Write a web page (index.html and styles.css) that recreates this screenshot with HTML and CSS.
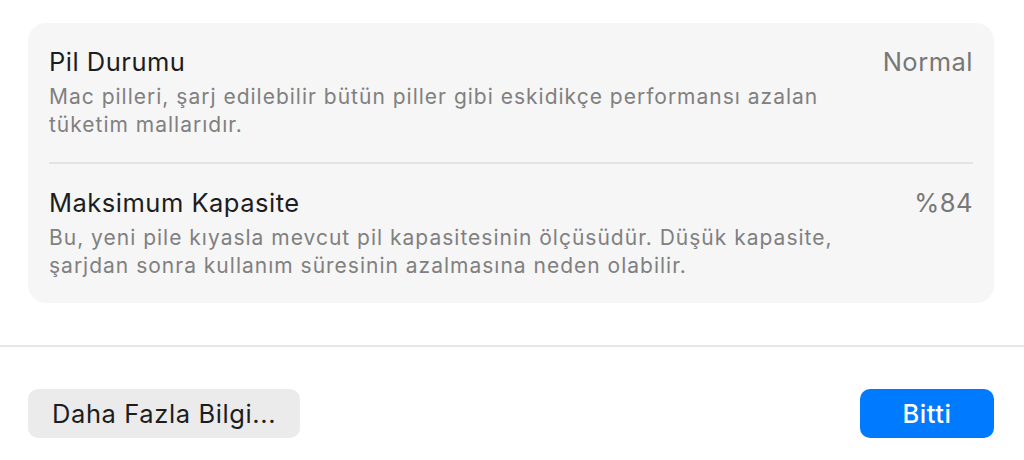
FILE: index.html
```html
<!DOCTYPE html>
<html lang="tr">
<head>
    <meta charset="UTF-8">
    <title>Pil Durumu</title>
    <link rel="stylesheet" href="styles.css">
</head>
<body>
    <div class="sheet">
        <div class="card">
            <div class="row">
                <div class="info">
                    <div class="title">Pil Durumu</div>
                    <div class="desc">Mac pilleri, şarj edilebilir bütün piller gibi eskidikçe performansı azalan tüketim mallarıdır.</div>
                </div>
                <div class="value">Normal</div>
            </div>
            <div class="row">
                <div class="info">
                    <div class="title">Maksimum Kapasite</div>
                    <div class="desc">Bu, yeni pile kıyasla mevcut pil kapasitesinin ölçüsüdür. Düşük kapasite, şarjdan sonra kullanım süresinin azalmasına neden olabilir.</div>
                </div>
                <div class="value">%84</div>
            </div>
        </div>
    </div>
    <div class="footer">
        <button class="btn">Daha Fazla Bilgi...</button>
        <button class="btn primary">Bitti</button>
    </div>
</body>
</html>
```

FILE: styles.css
```css
body {
    margin: 0;
    background-color: #fff;
    font-family: Inter, "Noto Sans", sans-serif;
    color: #1d1d1d;
}
.sheet {
    padding: 23px 30px 42px 28px;
    border-bottom: 2px solid #e6e6e6;
}
.card {
    background-color: #f6f6f6;
    border-radius: 18px;
    padding: 0 21px;
}
.row {
    display: flex;
    justify-content: space-between;
    padding: 23px 0 23px 0;
}
.row + .row {
    border-top: 2px solid #e4e4e4;
}
.info {
    width: 810px;
}
.title {
    font-size: 25.5px;
    line-height: 32px;
    letter-spacing: 0.5px;
    color: #1d1d1d;
}
.desc {
    margin-top: 5px;
    font-size: 21px;
    line-height: 28px;
    letter-spacing: 1px;
    color: #808080;
}
.value {
    font-size: 25.5px;
    line-height: 32px;
    letter-spacing: 0.5px;
    color: #777;
}
.footer {
    display: flex;
    justify-content: space-between;
    padding: 42px 30px 0 28px;
}
.btn {
    height: 49px;
    padding: 0 24px;
    border: none;
    border-radius: 10px;
    background-color: #ebebeb;
    font-family: Inter, "Noto Sans", sans-serif;
    font-size: 25.5px;
    letter-spacing: 0.6px;
    color: #1d1d1d;
}
.btn.primary {
    width: 134px;
    background-color: #007aff;
    color: #fff;
    font-weight: 500;
}
```
